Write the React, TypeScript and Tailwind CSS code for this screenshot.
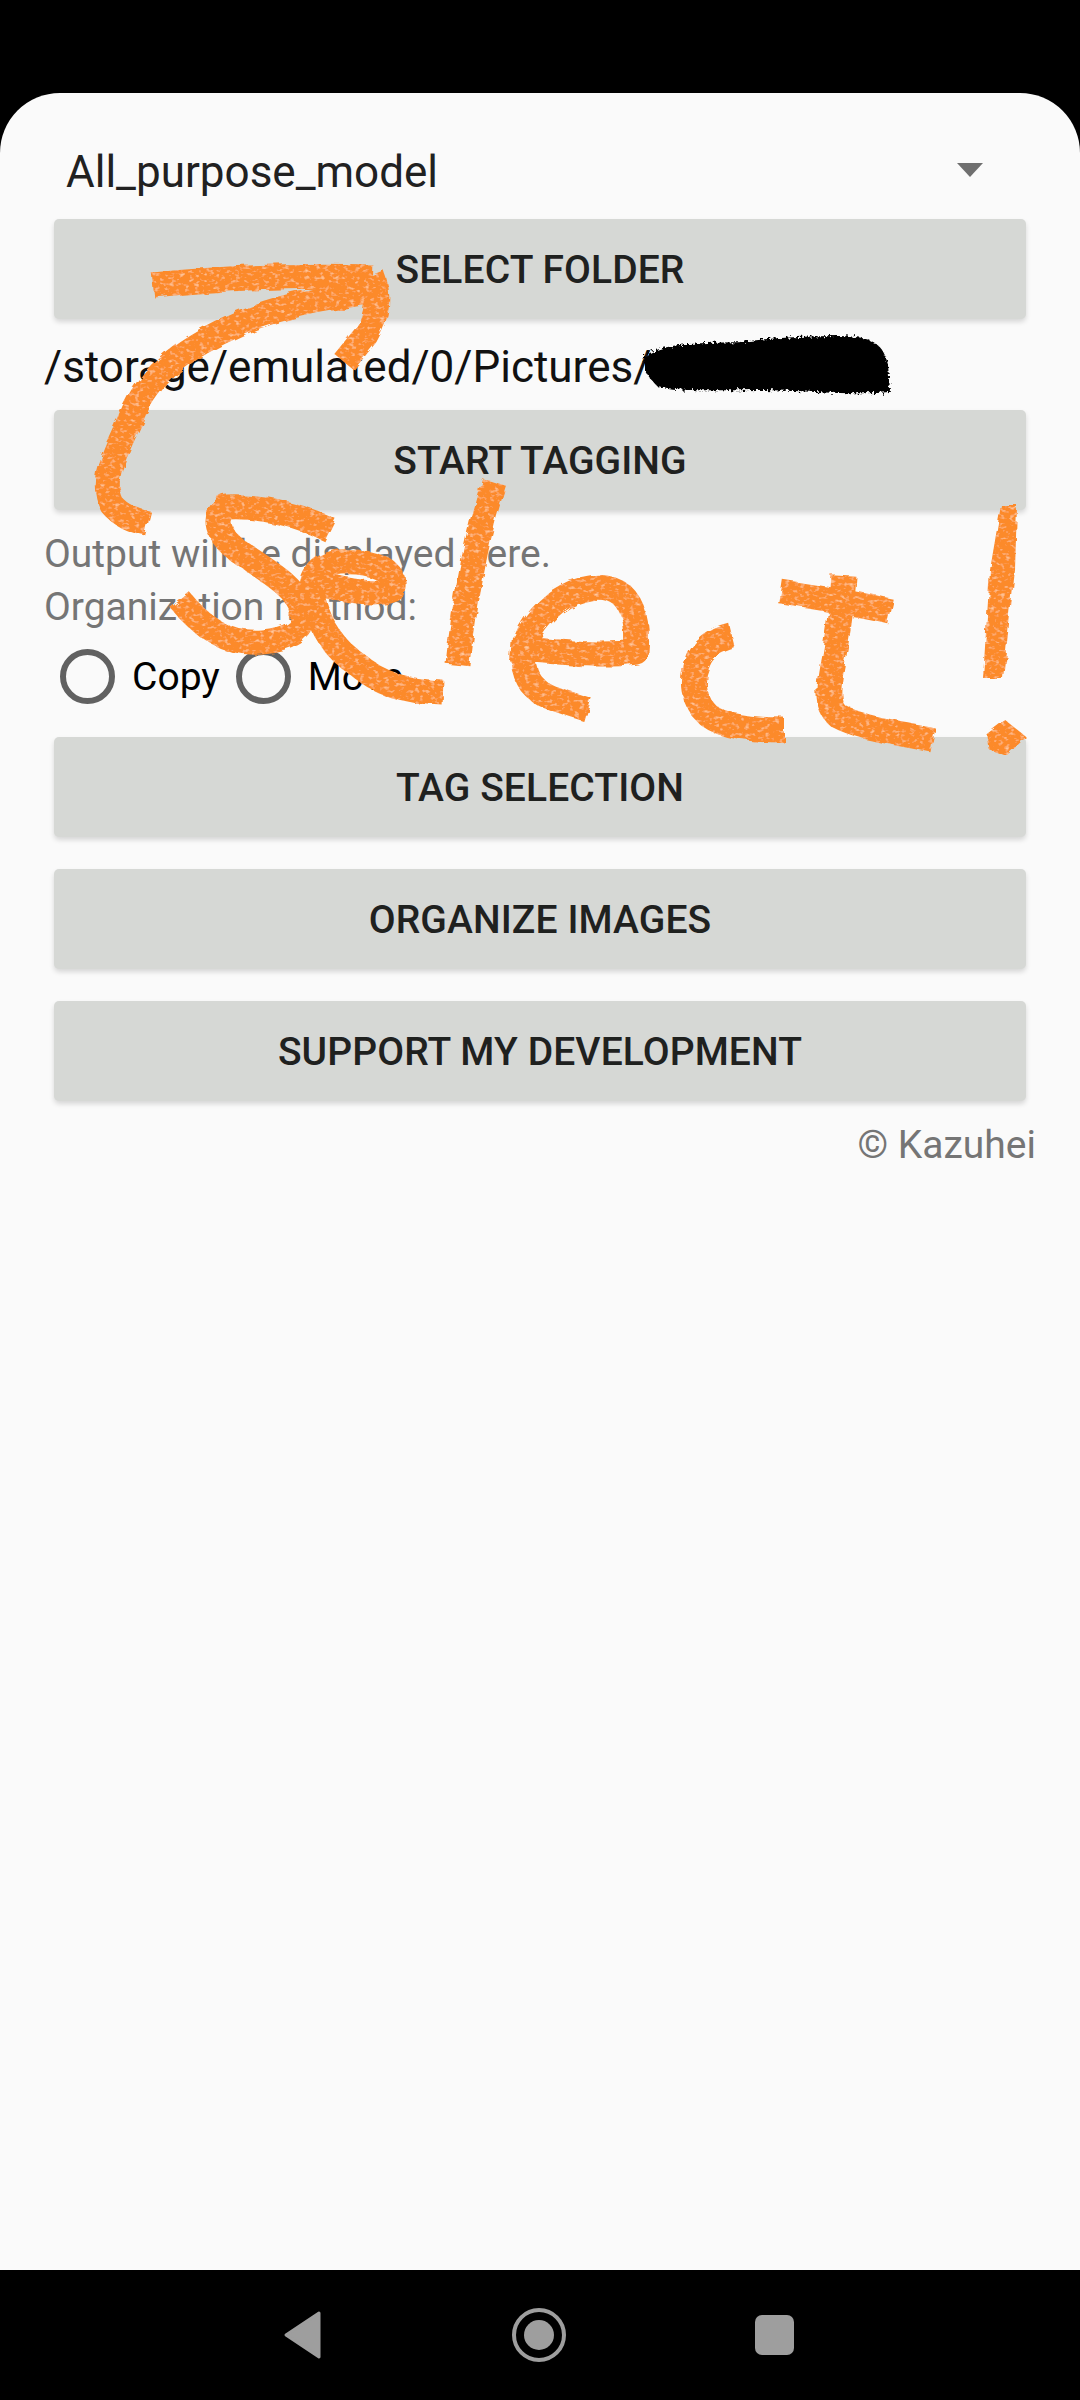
const strokes = [
  "M153 285 C 220 278, 300 275, 372 277",
  "M382 290 C 330 298, 280 305, 240 323 C 190 345, 150 370, 130 420 C 112 460, 100 480, 112 505 C 120 515, 132 520, 148 524",
  "M372 275 C 382 300, 375 320, 366 335 L 344 362",
  "M330 530 C 300 515, 260 505, 227 507 C 212 515, 215 535, 241 553 C 270 572, 300 590, 303 613 C 305 630, 290 640, 262 642 C 225 645, 200 625, 180 600",
  "M310 581 C 340 590, 375 597, 392 590 C 400 570, 370 560, 340 562 C 318 565, 308 580, 313 600 C 322 630, 335 650, 358 665 C 380 685, 410 692, 443 693",
  "M494 482 C 485 510, 478 535, 472 570 C 466 600, 462 625, 458 665",
  "M510 648 C 560 652, 600 657, 636 652 C 638 630, 636 608, 622 595 C 605 582, 580 586, 556 602 C 532 622, 522 642, 523 660 C 525 680, 535 692, 552 698 C 565 703, 575 706, 588 710",
  "M732 636 C 715 640, 702 650, 698 662 C 690 680, 692 700, 708 715 C 725 728, 755 730, 784 730",
  "M781 592 C 815 597, 855 603, 890 611",
  "M844 576 C 842 610, 838 630, 834 655 C 828 685, 825 705, 838 716 C 860 728, 895 732, 933 740",
];

function Btn({ label, className = "" }: { label: string; className?: string }) {
  return (
    <button className={`mx-[10px] flex h-[100px] shrink-0 items-center justify-center rounded-[5px] bg-[#d6d8d5] pt-[2px] text-[39px] font-medium tracking-[0.1px] text-[#1f211f] shadow-[0_3px_5px_rgba(0,0,0,0.14)] ${className}`}>
      {label}
    </button>
  );
}

function Radio({ label }: { label: string }) {
  return (
    <div className="flex items-center">
      <span className="ml-[16px] h-[55px] w-[55px] rounded-full border-[6px] border-[#616161]" />
      <span className="ml-[17px] text-[39px] leading-[54px] text-black">{label}</span>
    </div>
  );
}

export default function App() {
  return (
    <div className="relative flex h-[2400px] w-[1080px] flex-col overflow-hidden bg-black [font-family:Roboto,sans-serif]">
      <div className="h-[93px] shrink-0" />
      <main className="flex flex-1 flex-col rounded-t-[60px] bg-[#fafafa] px-[44px]">
        <div className="flex h-[126px] shrink-0 items-center pl-[22px] pr-[53px] pt-[32px]">
          <span className="flex-1 text-[44px] leading-[56px] text-[#212121]">All_purpose_model</span>
          <svg width="26" height="14" viewBox="0 0 26 14" className="mt-[-4px]">
            <path d="M0 0H26L13 14Z" fill="#6f6f6f" />
          </svg>
        </div>
        <Btn label="SELECT FOLDER" />
        <div className="flex h-[91px] shrink-0 items-center pt-[5px] text-[44px] leading-[56px] text-[#111]">
          /storage/emulated/0/Pictures/
        </div>
        <Btn label="START TAGGING" />
        <div className="mt-[18px] text-[39px] leading-[53px] text-[#757575]">
          <div>Output will be displayed here.</div>
          <div>Organization method:</div>
        </div>
        <div className="mt-[15px] flex">
          <Radio label="Copy" />
          <Radio label="Move" />
        </div>
        <Btn label="TAG SELECTION" className="mt-[33px]" />
        <Btn label="ORGANIZE IMAGES" className="mt-[32px]" />
        <Btn label="SUPPORT MY DEVELOPMENT" className="mt-[32px]" />
        <div className="mt-[22px] self-end text-[39px] leading-[44px] text-[#757575]">© Kazuhei</div>
      </main>
      <nav className="flex h-[130px] shrink-0 items-center bg-black">
        <svg width="1080" height="130" viewBox="0 0 1080 130">
          <path d="M319 43 L286 65 L319 87 Z" fill="#9e9e9e" stroke="#9e9e9e" strokeWidth="3" strokeLinejoin="round" />
          <circle cx="539" cy="65" r="25" fill="none" stroke="#9e9e9e" strokeWidth="4" />
          <circle cx="539" cy="65" r="15" fill="#9e9e9e" />
          <rect x="755" y="45" width="39" height="40" rx="7" fill="#9e9e9e" />
        </svg>
      </nav>

      <svg className="pointer-events-none absolute left-0 top-0" width="1080" height="2400" viewBox="0 0 1080 2400">
        <defs>
          <filter id="chalk" x="-5%" y="-5%" width="110%" height="110%">
            <feTurbulence type="fractalNoise" baseFrequency="0.06 0.09" numOctaves="2" seed="4" result="n" />
            <feDisplacementMap in="SourceGraphic" in2="n" scale="7" result="d" />
            <feTurbulence type="fractalNoise" baseFrequency="0.2 0.3" numOctaves="2" seed="9" />
            <feColorMatrix values="0 0 0 0 1  0 0 0 0 0.66  0 0 0 0 0.4  0 0 0 2.4 -1.3" result="sp" />
            <feComposite in="sp" in2="d" operator="in" result="spk" />
            <feMerge>
              <feMergeNode in="d" />
              <feMergeNode in="spk" />
            </feMerge>
          </filter>
          <filter id="scrib" x="-5%" y="-20%" width="110%" height="140%">
            <feTurbulence type="fractalNoise" baseFrequency="0.35" numOctaves="2" seed="2" />
            <feDisplacementMap in="SourceGraphic" scale="8" />
          </filter>
        </defs>
        <g filter="url(#scrib)">
          <path d="M646 358 C 660 345, 700 345, 740 344 C 770 340, 800 338, 840 338 C 870 338, 882 345, 886 365 L 888 390 C 860 394, 800 388, 760 388 C 720 388, 680 390, 658 384 C 650 376, 644 368, 646 358 Z" fill="#000" stroke="#000" strokeWidth="4" strokeLinejoin="round" />
        </g>
        <g filter="url(#chalk)" fill="none" stroke="#fc8a2b" strokeWidth="25" strokeLinejoin="round">
          {strokes.map((d) => (
            <path key={d} d={d} />
          ))}
          <path d="M1001 505 H1017 L1015 570 L1003 678 H983 L990 570 Z" fill="#fc8a2b" stroke="none" />
          <path d="M1005 722 L1024 737 L1006 754 L990 748 L988 735 Z" fill="#fc8a2b" stroke="#fc8a2b" strokeWidth="3" />
        </g>
      </svg>
    </div>
  );
}
